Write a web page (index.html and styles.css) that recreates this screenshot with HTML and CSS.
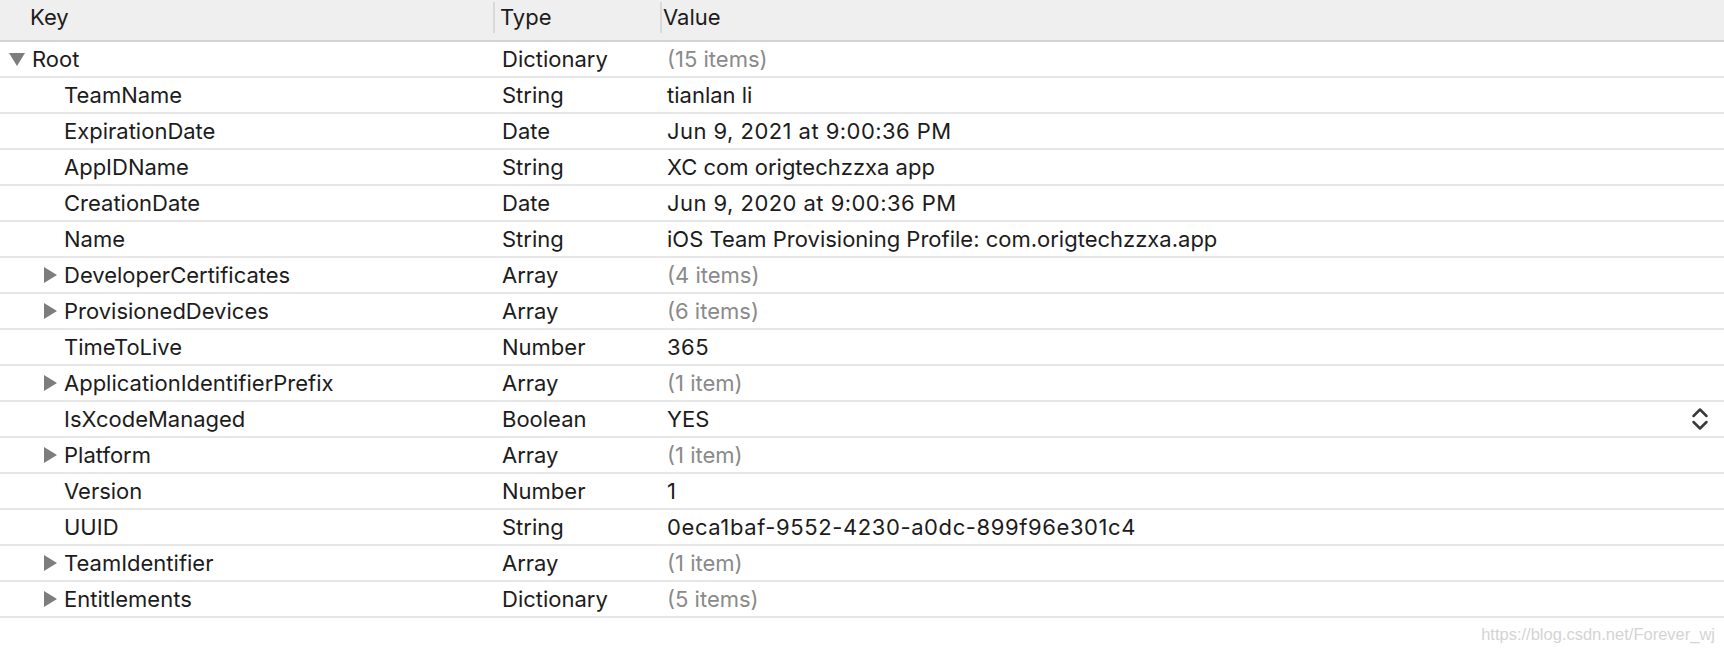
FILE: index.html
```html
<!DOCTYPE html>
<html>
<head>
<meta charset="utf-8">
<link rel="stylesheet" href="styles.css">
</head>
<body>
<div class="plist">
  <div class="head">
    <div class="hcell hkey">Key</div>
    <div class="hcell hsep">Type</div>
    <div class="hcell hsep hval">Value</div>
  </div>
  <div class="row">
    <div class="key lvl0"><span class="disc down"></span><span>Root</span></div>
    <div class="type">Dictionary</div>
    <div class="val muted">(15 items)</div>
  </div>
  <div class="row">
    <div class="key lvl1"><span class="disc"></span><span>TeamName</span></div>
    <div class="type">String</div>
    <div class="val">tianlan li</div>
  </div>
  <div class="row">
    <div class="key lvl1"><span class="disc"></span><span>ExpirationDate</span></div>
    <div class="type">Date</div>
    <div class="val num">Jun 9, 2021 at 9:00:36 PM</div>
  </div>
  <div class="row">
    <div class="key lvl1"><span class="disc"></span><span>AppIDName</span></div>
    <div class="type">String</div>
    <div class="val">XC com origtechzzxa app</div>
  </div>
  <div class="row">
    <div class="key lvl1"><span class="disc"></span><span>CreationDate</span></div>
    <div class="type">Date</div>
    <div class="val num">Jun 9, 2020 at 9:00:36 PM</div>
  </div>
  <div class="row">
    <div class="key lvl1"><span class="disc"></span><span>Name</span></div>
    <div class="type">String</div>
    <div class="val">iOS Team Provisioning Profile: com.origtechzzxa.app</div>
  </div>
  <div class="row">
    <div class="key lvl1"><span class="disc right"></span><span>DeveloperCertificates</span></div>
    <div class="type">Array</div>
    <div class="val muted">(4 items)</div>
  </div>
  <div class="row">
    <div class="key lvl1"><span class="disc right"></span><span>ProvisionedDevices</span></div>
    <div class="type">Array</div>
    <div class="val muted">(6 items)</div>
  </div>
  <div class="row">
    <div class="key lvl1"><span class="disc"></span><span>TimeToLive</span></div>
    <div class="type">Number</div>
    <div class="val num">365</div>
  </div>
  <div class="row">
    <div class="key lvl1"><span class="disc right"></span><span>ApplicationIdentifierPrefix</span></div>
    <div class="type">Array</div>
    <div class="val muted">(1 item)</div>
  </div>
  <div class="row">
    <div class="key lvl1"><span class="disc"></span><span>IsXcodeManaged</span></div>
    <div class="type">Boolean</div>
    <div class="val popup"><span>YES</span>
      <svg class="chev" width="18" height="26" viewBox="0 0 18 26"><path d="M2.5 10 L9 3.5 L15.5 10 M2.5 16 L9 22.5 L15.5 16" fill="none" stroke="#3a3a3a" stroke-width="2.5" stroke-linecap="round" stroke-linejoin="round"/></svg>
    </div>
  </div>
  <div class="row">
    <div class="key lvl1"><span class="disc right"></span><span>Platform</span></div>
    <div class="type">Array</div>
    <div class="val muted">(1 item)</div>
  </div>
  <div class="row">
    <div class="key lvl1"><span class="disc"></span><span>Version</span></div>
    <div class="type">Number</div>
    <div class="val num">1</div>
  </div>
  <div class="row">
    <div class="key lvl1"><span class="disc"></span><span>UUID</span></div>
    <div class="type">String</div>
    <div class="val uuid">0eca1baf-9552-4230-a0dc-899f96e301c4</div>
  </div>
  <div class="row">
    <div class="key lvl1"><span class="disc right"></span><span>TeamIdentifier</span></div>
    <div class="type">Array</div>
    <div class="val muted">(1 item)</div>
  </div>
  <div class="row">
    <div class="key lvl1"><span class="disc right"></span><span>Entitlements</span></div>
    <div class="type">Dictionary</div>
    <div class="val muted">(5 items)</div>
  </div>
</div>
<div class="mark">https://blog.csdn.net/Forever_wj</div>
</body>
</html>
```
FILE: styles.css
```css
html, body {
  margin: 0;
  padding: 0;
  background: #ffffff;
}
body {
  font-family: Inter, "Noto Sans", "Liberation Sans", sans-serif;
  font-size: 22px;
  color: #1c1c1c;
  width: 1724px;
  height: 652px;
  overflow: hidden;
}
.plist {
  display: flex;
  flex-direction: column;
}
.head {
  display: grid;
  grid-template-columns: 493px 167px 1fr;
  align-items: start;
  height: 40px;
  background: #efefef;
  border-bottom: 2px solid #d4d4d4;
}
.hcell {
  height: 31px;
  margin-top: 2px;
  padding-bottom: 2px;
  box-sizing: border-box;
  display: flex;
  align-items: center;
}
.hkey {
  padding-left: 30px;
}
.hsep {
  border-left: 2px solid #d9d9d9;
  padding-left: 5px;
}
.hval {
  padding-left: 1px;
}
.row {
  display: grid;
  grid-template-columns: 493px 167px 1fr;
  height: 34px;
  align-items: center;
  border-bottom: 2px solid #e6e6e6;
}
.key {
  display: flex;
  align-items: center;
  gap: 7px;
  white-space: nowrap;
}
.lvl0 { padding-left: 9px; }
.lvl1 { padding-left: 41px; }
.disc {
  width: 16px;
  height: 16px;
  flex: none;
  display: flex;
  align-items: center;
  justify-content: center;
}
.disc.down::before {
  content: "";
  width: 0;
  height: 0;
  border-left: 8px solid transparent;
  border-right: 8px solid transparent;
  border-top: 13px solid #7d7d7d;
}
.disc.right::before {
  content: "";
  width: 0;
  height: 0;
  margin-left: 2px;
  border-top: 8px solid transparent;
  border-bottom: 8px solid transparent;
  border-left: 13px solid #7d7d7d;
}
.type {
  padding-left: 9px;
}
.val {
  padding-left: 7px;
  white-space: nowrap;
}
.num {
  letter-spacing: 0.45px;
}
.uuid {
  letter-spacing: 0.6px;
}
.muted {
  color: #8a8a8a;
}
.popup {
  display: flex;
  align-items: center;
  justify-content: space-between;
  padding-right: 15px;
}
.chev {
  display: block;
}
.mark {
  text-align: right;
  padding-right: 9px;
  margin-top: 7px;
  font-family: "Liberation Sans", Arial, sans-serif;
  font-size: 16.5px;
  color: #d4d4d4;
}
```
